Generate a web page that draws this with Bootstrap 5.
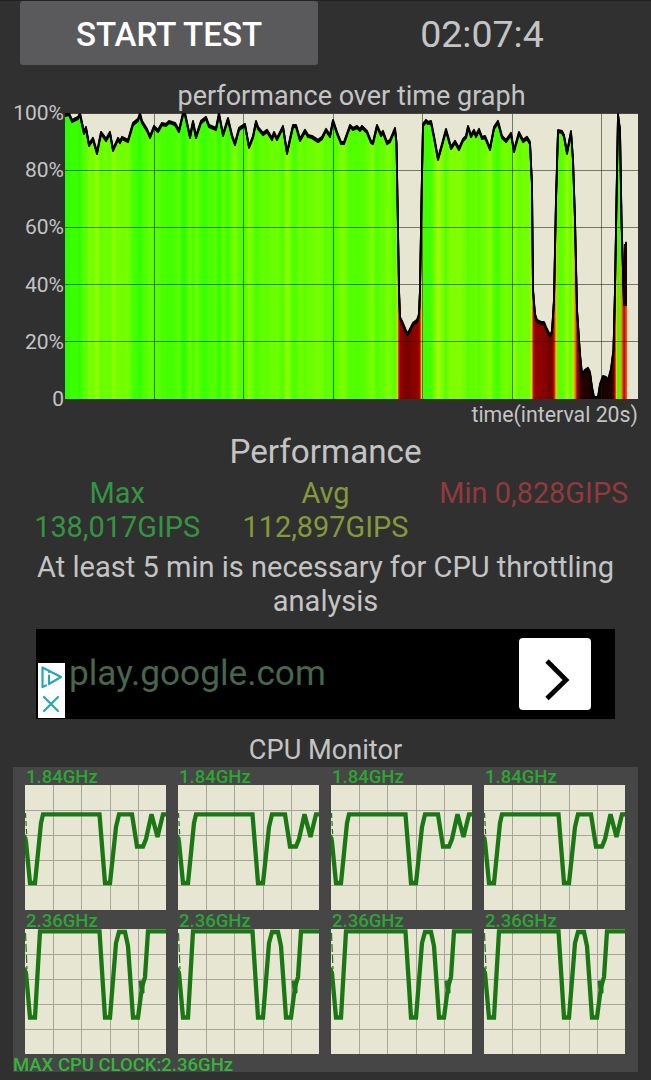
<!DOCTYPE html>
<html lang="en">
<head>
<meta charset="utf-8">
<meta name="viewport" content="width=device-width, initial-scale=1">
<title>CPU Throttling Test</title>
<link href="https://cdn.jsdelivr.net/npm/bootstrap@5.3.0/dist/css/bootstrap.min.css" rel="stylesheet">
<style>
body{background:#303030;color:#c4c4c4;font-family:Roboto,sans-serif;height:1080px;overflow:hidden;line-height:1.15}
svg{display:block}
.line{white-space:nowrap;text-align:center}
.topbar{height:81px;border-top:1px solid #232323;padding-left:20px}
.btn-start{width:298px;height:64px;background:#5a5a5c;color:#fff;font-size:33.1px;font-weight:500;border:0;border-radius:3px;padding:4px 0 0;line-height:1}
.btn-start:hover{background:#666;color:#fff}
.timer{width:328px;font-size:37.5px;line-height:66px}
.graph-title{font-size:27px;height:32px;line-height:30px;padding-left:52px}
.yaxis{width:65px;height:310px;margin-top:-12px;font-size:21px;line-height:24px;text-align:right;padding-right:1px}
.plot-row{height:286px}
.xlabel{font-size:21.3px;height:34px;line-height:31px;text-align:right;padding-right:13px}
.perf{font-size:33.2px;height:43px;line-height:38px}
.stats{height:74px;font-size:28.9px;line-height:34px;padding:0 13px}
.c-max{color:#359440}.c-avg{color:#84993b}.c-min{color:#913a3d}
.note{font-size:29.05px;line-height:34px;height:79px}
.ad{width:579px;height:90px;margin-left:36px;background:#000;position:relative}
.adchoice{position:absolute;left:2px;bottom:1px;width:27px;height:55px;background:#fff}
.ad-url{color:#47664c;font-size:35.2px;line-height:89px;padding-left:33px}
.ad-go{width:72px;height:72px;border-radius:4px;background:#fff;margin:9px 24px 0 auto}
.monitor-title{font-size:27.2px;height:48px;line-height:63px}
.monitor{width:625px;height:305px;margin-left:13px;background:#464646;padding-left:12px}
.cores{display:grid;grid-template-columns:repeat(4,141px);column-gap:12px;height:287px}
.core-label{color:#2ba633;font-size:18.5px;line-height:21px;height:18px;padding-left:1px;font-weight:500}
.core{height:144px}
.clock{color:#35b53b;font-size:18.5px;line-height:22px;font-weight:500;margin-left:-12px}
</style>
</head>
<body>
<header class="topbar d-flex">
  <button class="btn btn-start" type="button">START TEST</button>
  <div class="timer line">02:07:4</div>
</header>
<main>
  <div class="graph-title line"><span>performance over time graph</span></div>
  <section class="plot-row d-flex">
    <div class="yaxis d-flex flex-column justify-content-between"><span>100%</span><span>80%</span><span>60%</span><span>40%</span><span>20%</span><span>0</span></div>
    <svg width="573" height="286" viewBox="65 113 573 286">
      <defs><linearGradient id="heat" gradientUnits="userSpaceOnUse" x1="65" y1="0" x2="638" y2="0"></linearGradient></defs>
      <rect x="65" y="113" width="573" height="286" fill="#e7e6d3"/>
      <polygon id="area" fill="url(#heat)"/>
      <path d="M65 170.5H638M65 227.5H638M65 284.5H638M65 341.5H638M154.5 113V399M243.5 113V399M333.5 113V399M422.5 113V399M512.5 113V399M601.5 113V399" stroke="#102010" stroke-opacity=".55" fill="none"/>
      <path d="M65 113.5H638" stroke="#444"/>
      <g fill="none" stroke="#000" stroke-width="1.8" stroke-linejoin="round"><polyline id="trace"/><use href="#trace" y="-1.2"/><use href="#trace" y="1.2"/></g>
      <path d="M625.5 244V306" stroke="#180000" stroke-width="3"/>
    </svg>
  </section>
  <div class="xlabel">time(interval 20s)</div>
  <div class="perf line">Performance</div>
  <section class="stats row g-0 text-center">
    <div class="col-4 c-max">Max<br>138,017GIPS</div>
    <div class="col-4 c-avg">Avg<br>112,897GIPS</div>
    <div class="col-4 c-min text-nowrap">Min 0,828GIPS</div>
  </section>
  <div class="note line">At least 5 min is necessary for CPU throttling<br>analysis</div>
  <section class="ad d-flex">
    <div class="adchoice">
      <svg width="27" height="55" viewBox="0 0 27 55" fill="none" stroke="#28a5b8" stroke-width="2.2" stroke-linecap="round" stroke-linejoin="round"><path d="M8 22.5L4.5 24V4.5L23 14L11 21V12.5M11 8.5V9M6 34L20 48M20 34L6 48"/></svg>
    </div>
    <div class="ad-url text-nowrap">play.google.com</div>
    <div class="ad-go"><svg width="72" height="72" viewBox="0 0 72 72"><path d="M28 23L47 42L28 60.5" fill="none" stroke="#000" stroke-width="4.8"/></svg></div>
  </section>
  <div class="monitor-title line">CPU Monitor</div>
  <section class="monitor">
    <div class="cores" id="cores"></div>
    <div class="clock">MAX CPU CLOCK:2.36GHz</div>
  </section>
</main>
<script src="https://cdn.jsdelivr.net/npm/bootstrap@5.3.0/dist/js/bootstrap.bundle.min.js"></script>
<script>
const pts = "65,115 69,114 72,121 78,118 80,114 84,133 86,128 89,145 93,139 97,153 101,133 104,137 106,140 110,133 113,150 118,139 120,142 122,138 128,141 133,124 138,120 140,114 142,122 147,130 150,137 154,127 158,131 162,124 166,125 169,122 175,124 179,131 183,114 185,114 190,137 193,122 196,137 201,122 206,118 209,126 216,129 219,114 223,135 228,119 232,136 235,144 239,129 245,125 249,147 253,137 256,122 258,128 263,134 267,131 272,139 274,133 277,139 283,127 287,153 293,126 296,126 300,140 305,131 308,136 312,137 318,141 322,138 326,130 330,136 333,121 337,133 341,143 344,143 350,126 353,129 357,127 360,130 362,127 367,132 371,142 373,143 377,126 381,135 383,132 387,143 390,141 395,129 396.5,143 397.5,200 399,290 400,318 402,322 407,334 409,332 413,324 417,321 419,315 420,290 421.5,200 423,125 426,121 428,123 431,122 434,137 438,159 442,145 446,130 451,148 455,142 459,149 463,140 466,137 468,127 471,136 474,131 476,136 479,130 482,138 485,137 490,149 494,128 498,122 502,137 506,141 511,134 514,151 519,133 523,141 527,138 530,143 532,185 533,290 535,315 537,321 541,323 544,323 546,328 550,336 552,332 554,300 556,200 558,131 562,132 564,136 567,153 571,132 573,160 575,220 577,310 580,355 582,375 585,371 588,369 590,373 592,388 594,398 598,398 600,385 603,377 606,378 608,381 611,370 613.5,350 615,290 616.5,200 618,115 620,130 621.5,220 624,304 625,270 626,243";
document.getElementById('trace').setAttribute('points', pts);
document.getElementById('area').setAttribute('points', pts + ' 627,243 627,399 65,399');
// colour by throughput: black, dark red, red, yellow, green
const ramp = [[0,[10,0,0]],[.1,[32,0,0]],[.25,[132,0,0]],[.45,[225,15,0]],[.72,[255,210,0]],[.85,[155,255,0]],[.92,[105,255,0]],[1,[40,255,0]]];
function heat(v){
  for (let i = 1; i < ramp.length; i++) if (v <= ramp[i][0]) {
    const [a,p] = ramp[i-1], [b,q] = ramp[i], t = (v-a)/(b-a);
    return 'rgb(' + p.map((c,k) => Math.round(c+(q[k]-c)*t)) + ')';
  }
  return 'rgb(40,255,0)';
}
document.getElementById('heat').innerHTML = pts.split(' ').map(p => {
  const [x,y] = p.split(',').map(Number);
  return `<stop offset="${(x-65)/573}" stop-color="${heat(Math.max(0,(399-y)/286))}"/>`;
}).join('');
const low = '<path d="M-1 50L1 57L5 98H10L16 38L18 29.3H74.5L80 98H85L91 42L94 29.3H107L112 61.5H118L121 54L126.5 29.3L132.5 52L138 29.3H143"/><path d="M.5 28L2 56" stroke-width="1.2" stroke-dasharray="5 3"/>';
const high = '<path d="M-1 39L1 44L5 88.5H10L15 2.3H74.5L80 88.5H85L91 14L94 3H100L103 17L108 88.5H113L117 58L120 48L123 2.3H143"/><path d="M114 52H119V64H117L115 60Z" fill="#1b7714" stroke-width="1"/><path d="M.5 4L2 40" stroke-width="1.2" stroke-dasharray="8 3"/>';
let out = '';
for (let i = 0; i < 8; i++) {
  out += `<div class="core"><div class="core-label">${i < 4 ? '1.84GHz' : '2.36GHz'}</div><svg width="141" height="125" viewBox="0 0 141 125"><rect width="141" height="125" fill="#e7e6d3"/><path d="M28.5 0V125M56.5 0V125M85.5 0V125M113.5 0V125M0 25.5H141M0 50.5H141M0 75.5H141M0 100.5H141" stroke="#a5a599" fill="none"/><g fill="none" stroke="#1b7714" stroke-width="4.3">${i < 4 ? low : high}</g></svg></div>`;
}
document.getElementById('cores').innerHTML = out;
</script>
</body>
</html>
